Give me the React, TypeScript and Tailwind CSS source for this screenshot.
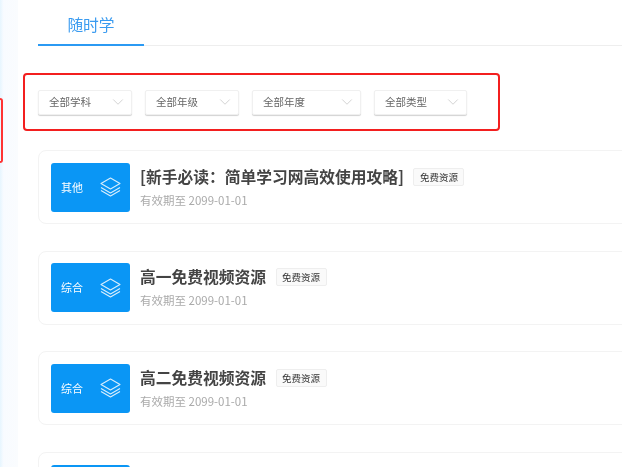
import { ChevronDown } from "lucide-react";

const filters = [
  { label: "全部学科", width: "w-[94px]" },
  { label: "全部年级", width: "w-[94px]" },
  { label: "全部年度", width: "w-[109px]" },
  { label: "全部类型", width: "w-[93px]" },
];

const courses = [
  { tag: "其他", title: "[新手必读：简单学习网高效使用攻略]" },
  { tag: "综合", title: "高一免费视频资源" },
  { tag: "综合", title: "高二免费视频资源" },
];

function Layers() {
  return (
    <svg width="21" height="20" viewBox="0 0 21 20" fill="none" stroke="currentColor" strokeWidth="1.1" strokeLinejoin="round">
      <path d="M10.5 1 L20 6.5 L10.5 12 L1 6.5 Z" />
      <path d="M1 10.5 L10.5 16 L20 10.5" />
      <path d="M1 13.5 L10.5 19 L20 13.5" />
    </svg>
  );
}

export default function App() {
  return (
    <div className="relative h-[467px] w-[622px] overflow-hidden bg-white font-['Noto_Sans_CJK_SC','Liberation_Sans',sans-serif] blur-[0.4px]">
      <div className="absolute left-0 top-[98px] h-[65px] w-[3px] rounded-r-sm border-y-2 border-r-2 border-[#f33]" />
      <div className="flex h-full">
        <div className="w-[18px] shrink-0 bg-gradient-to-r from-[#e6f5fe] from-0% via-[#f8fbff] via-20% to-[#fafcfe]" />
        <div className="min-w-0 flex-1 pl-5">
          <div className="flex h-[46px] border-b border-[#eeeeee]">
            <div className="-mb-px flex h-[46px] w-[106px] items-start justify-center border-b-2 border-[#2b9af3] pt-[13px] text-[15.75px] leading-6 text-[#3a9bf0]">
              随时学
            </div>
          </div>
          <div className="-ml-[15px] mt-[27px] flex h-[58px] w-[477px] items-center gap-[13px] rounded-sm border-2 border-[#f31f1f] pl-[13px]">
            {filters.map((f) => (
              <div
                key={f.label}
                className={`${f.width} flex h-[25px] items-center justify-between rounded-[2px] border border-[#f0f0f0] bg-white pl-2.5 pr-[4px] text-[10.5px] text-[#666] shadow-[0_1px_1px_rgba(0,0,0,0.18)]`}
              >
                {f.label}
                <ChevronDown className="size-[18px] text-[#c4c4c4]" strokeWidth={1} />
              </div>
            ))}
          </div>
          <div className="mt-[19px] flex flex-col gap-[26.67px]">
            {courses.map((c) => (
              <div key={c.title} className="flex h-[74px] w-[600px] items-center gap-[10px] rounded-lg border border-[#f3f3f3] pl-[12px]">
                <div className="flex h-[49px] w-[79px] items-center justify-between rounded-[3px] bg-[#0a96f5] pl-2.5 pr-[9px] text-[11px] text-white">
                  {c.tag}
                  <span className="text-[#d8eefd]">
                    <Layers />
                  </span>
                </div>
                <div>
                  <div className="flex items-center gap-[9.5px]">
                    <span className="text-[15.75px] font-bold leading-5 text-[#444]">{c.title}</span>
                    <span className="rounded-[2px] border border-[#eeeeee] bg-[#fafafa] px-[5.5px] text-[9.5px] leading-4 text-[#333]">免费资源</span>
                  </div>
                  <div className="mt-[5px] text-[11.5px] leading-4 text-[#aaa]">有效期至 2099-01-01</div>
                </div>
              </div>
            ))}
            <div className="h-[74px] w-[600px] rounded-lg border border-[#f3f3f3] pl-[12px] pt-3">
              <div className="h-[49px] w-[79px] rounded-[3px] bg-[#0a96f5]" />
            </div>
          </div>
        </div>
      </div>
    </div>
  );
}
